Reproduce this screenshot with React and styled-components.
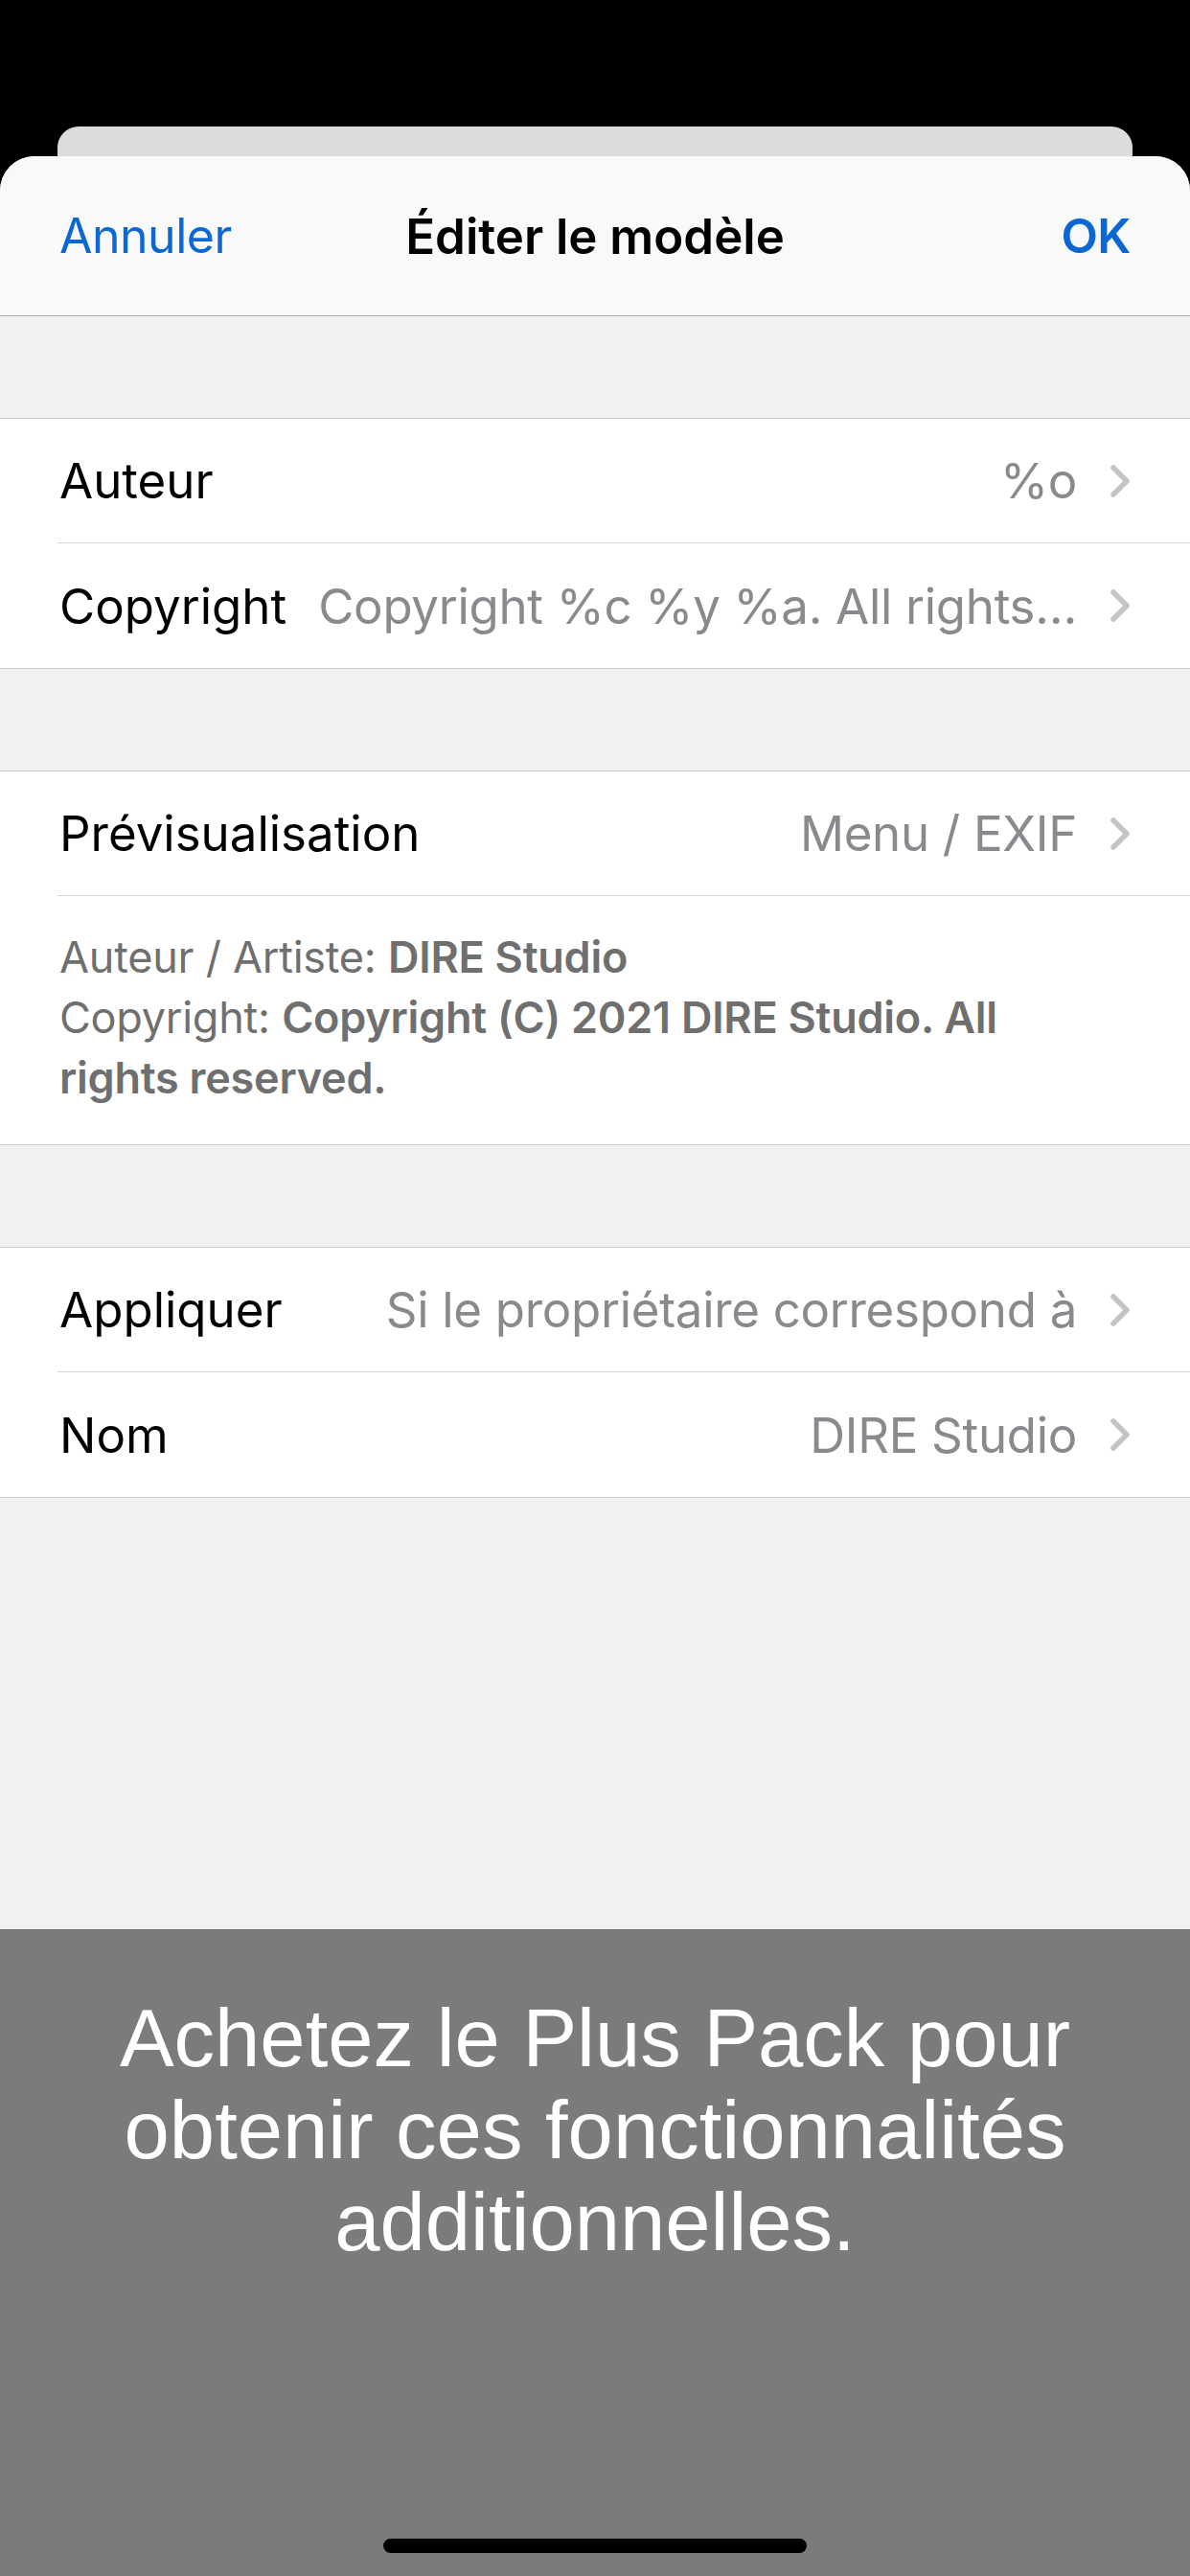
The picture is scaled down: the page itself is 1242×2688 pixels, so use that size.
import React from 'react';
import styled, { createGlobalStyle } from 'styled-components';

const GlobalStyle = createGlobalStyle`
  html, body {
    margin: 0;
    padding: 0;
    background: #000;
  }
  * {
    box-sizing: border-box;
  }
`;

const Screen = styled.div`
  width: 1242px;
  height: 2688px;
  display: flex;
  flex-direction: column;
  padding-top: 132px;
  background: #000;
  font-family: Inter, "Noto Sans", sans-serif;
  overflow: hidden;
`;

const BackCard = styled.div`
  height: 31px;
  margin: 0 60px;
  background: #dcdcdc;
  border-radius: 22px 22px 0 0;
  flex-shrink: 0;
`;

const Sheet = styled.div`
  flex: 1;
  display: flex;
  flex-direction: column;
  background: #f1f1f1;
  border-radius: 36px 36px 0 0;
  overflow: hidden;
`;

const NavBar = styled.div`
  height: 167px;
  flex-shrink: 0;
  display: flex;
  align-items: center;
  justify-content: space-between;
  padding: 0 62px;
  background: #f9f9f9;
  border-bottom: 1px solid #ababab;
  position: relative;
`;

const NavButton = styled.span`
  font-size: 50px;
  letter-spacing: -0.5px;
  color: #0b68d2;
  font-weight: ${p => (p.$bold ? 600 : 400)};
`;

const NavTitle = styled.span`
  position: absolute;
  left: 0;
  right: 0;
  text-align: center;
  font-size: 51px;
  font-weight: 600;
  color: #000;
  pointer-events: none;
`;

const Group = styled.div`
  margin-top: 106px;
  background: #fff;
  border-top: 1px solid #cbcbcb;
  border-bottom: 1px solid #cbcbcb;
`;

const Row = styled.div`
  padding-left: 60px;
  display: flex;
  &:last-child > div {
    border-bottom: none;
  }
`;

const RowBody = styled.div`
  flex: 1;
  min-width: 0;
  height: 130px;
  display: flex;
  align-items: center;
  gap: 30px;
  padding: 0 62px 0 2px;
  border-bottom: 1px solid #d4d4d4;
`;

const Label = styled.span`
  flex-shrink: 0;
  font-size: 51px;
  color: #000;
`;

const Value = styled.span`
  flex: 1;
  min-width: 0;
  text-align: right;
  font-size: 51px;
  letter-spacing: -0.3px;
  color: #8a8a8e;
  white-space: nowrap;
  overflow: hidden;
  text-overflow: ellipsis;
`;

const Chevron = styled.svg`
  flex-shrink: 0;
  width: 22px;
  height: 36px;
  margin-left: 4px;
`;

const Preview = styled.div`
  padding: 32px 62px 38px 62px;
  font-size: 45px;
  line-height: 63px;
  letter-spacing: -0.25px;
  color: #6f6f6f;
`;

const Strong = styled.b`
  font-weight: 600;
`;

const Spacer = styled.div`
  flex: 1;
`;

const Promo = styled.div`
  height: 675px;
  flex-shrink: 0;
  display: flex;
  flex-direction: column;
  align-items: center;
  padding: 66px 100px 0;
  background: #7b7b7b;
`;

const PromoText = styled.p`
  margin: 0;
  font-family: "Liberation Sans", Arial, sans-serif;
  font-size: 85px;
  line-height: 96px;
  color: #fff;
  text-align: center;
`;

const HomeBar = styled.div`
  margin-top: auto;
  margin-bottom: 24px;
  width: 442px;
  height: 15px;
  border-radius: 8px;
  background: #000;
`;

const ChevronIcon = () => (
  <Chevron viewBox="0 0 22 36">
    <polyline
      points="4,4 18,18 4,32"
      fill="none"
      stroke="#c4c4c7"
      strokeWidth="5.5"
      strokeLinecap="round"
      strokeLinejoin="round"
    />
  </Chevron>
);

const SettingRow = ({ label, value }) => (
  <Row>
    <RowBody>
      <Label>{label}</Label>
      <Value>{value}</Value>
      <ChevronIcon />
    </RowBody>
  </Row>
);

const App = () => (
  <Screen>
    <GlobalStyle />
    <BackCard />
    <Sheet>
      <NavBar>
        <NavButton>Annuler</NavButton>
        <NavTitle>Éditer le modèle</NavTitle>
        <NavButton $bold>OK</NavButton>
      </NavBar>

      <Group>
        <SettingRow label="Auteur" value="%o" />
        <SettingRow label="Copyright" value="Copyright %c %y %a. All rights…" />
      </Group>

      <Group>
        <SettingRow label="Prévisualisation" value="Menu / EXIF" />
        <Preview>
          Auteur / Artiste: <Strong>DIRE Studio</Strong>
          <br />
          Copyright: <Strong>Copyright (C) 2021 DIRE Studio. All</Strong>
          <br />
          <Strong>rights reserved.</Strong>
        </Preview>
      </Group>

      <Group>
        <SettingRow label="Appliquer" value="Si le propriétaire correspond à" />
        <SettingRow label="Nom" value="DIRE Studio" />
      </Group>

      <Spacer />

      <Promo>
        <PromoText>
          Achetez le Plus Pack pour obtenir ces fonctionnalités additionnelles.
        </PromoText>
        <HomeBar />
      </Promo>
    </Sheet>
  </Screen>
);

export default App;
